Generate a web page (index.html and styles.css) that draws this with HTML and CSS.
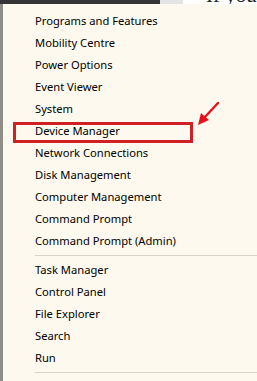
FILE: index.html
```html
<!DOCTYPE html>
<html lang="en">
<head>
    <meta charset="UTF-8">
    <meta name="viewport" content="width=device-width, initial-scale=1.0">
    <title>Quick Link Menu</title>
    <link rel="stylesheet" href="styles.css">
</head>
<body>
    <div class="topbar">
        <div class="topbar-dark"></div>
        <div class="topbar-grey"></div>
        <div class="topbar-page"><span class="page-text">If you</span></div>
    </div>
    <div class="menu">
        <div class="item">Programs and Features</div>
        <div class="item">Mobility Centre</div>
        <div class="item">Power Options</div>
        <div class="item">Event Viewer</div>
        <div class="item">System</div>
        <div class="item">Device Manager</div>
        <div class="item">Network Connections</div>
        <div class="item">Disk Management</div>
        <div class="item">Computer Management</div>
        <div class="item">Command Prompt</div>
        <div class="item">Command Prompt (Admin)</div>
        <div class="separator"></div>
        <div class="item">Task Manager</div>
        <div class="item">Control Panel</div>
        <div class="item">File Explorer</div>
        <div class="item">Search</div>
        <div class="item">Run</div>
        <div class="separator"></div>

        <!-- red annotation over Device Manager -->
        <div class="highlight"></div>
        <svg class="arrow" width="26" height="28" viewBox="0 0 26 28">
            <line x1="22" y1="3" x2="8" y2="18" stroke="#e5141c" stroke-width="2.4" stroke-linecap="round"/>
            <polygon points="2,25 5,13 13,20" fill="#e5141c"/>
        </svg>
    </div>
</body>
</html>
```

FILE: styles.css
```css
body {
    margin: 0;
    background-color: #fff;
    font-family: "Noto Sans", "Open Sans", sans-serif;
    overflow: hidden;
}
.topbar {
    display: flex;
    height: 4px;
    overflow: hidden;
}
.topbar-dark {
    width: 160px;
    background-color: #353535;
}
.topbar-grey {
    width: 23px;
    background-color: #e4e4e4;
}
.topbar-page {
    flex: 1;
    background-color: #fff;
    padding-left: 23px;
}
.page-text {
    display: block;
    margin-top: -14px;
    font-family: "Liberation Serif", serif;
    font-size: 21px;
    line-height: 18px;
    color: #222;
}
.menu {
    position: relative;
    background-color: #fdf9ee;
    border-left: 3px solid #8e8d88;
    padding-top: 6px;
    height: 377px;
    box-sizing: border-box;
}
.item {
    height: 22px;
    line-height: 22px;
    padding-left: 32px;
    font-size: 11.2px;
    color: #000;
    white-space: nowrap;
}
.separator {
    height: 1px;
    margin: 3px 0 3px 32px;
    background-color: #d6d3c8;
}
.highlight {
    position: absolute;
    left: 10px;
    top: 118px;
    width: 180px;
    height: 21px;
    border: 3px solid #d11f26;
    box-sizing: border-box;
}
.arrow {
    position: absolute;
    left: 193px;
    top: 96px;
}
```
